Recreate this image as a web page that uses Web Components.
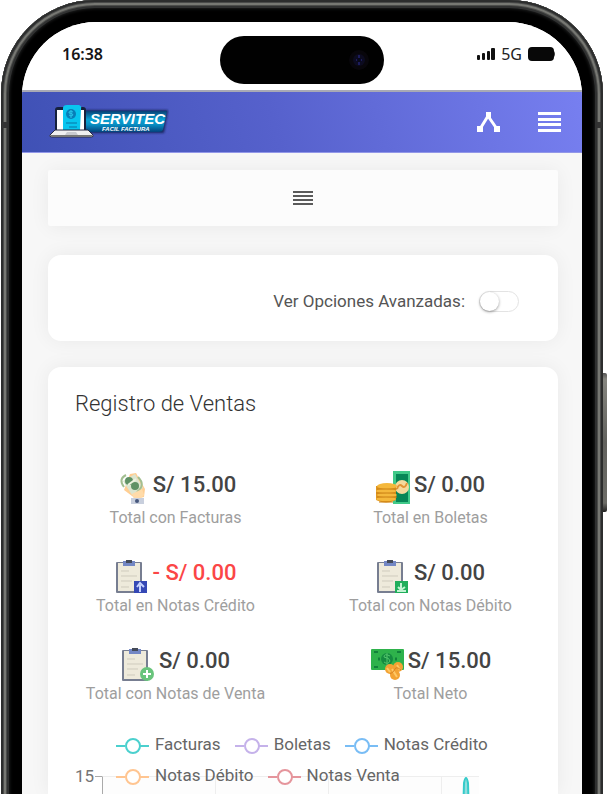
<!DOCTYPE html>
<html lang="es">
<head>
<meta charset="utf-8">
<meta name="viewport" content="width=device-width, initial-scale=1">
<title>Servitec - Registro de Ventas</title>
<style>
body{margin:0;background:#fff;color:#444;font-family:Roboto,"Liberation Sans",sans-serif}
</style>
</head>
<body>
<phone-frame>
  <status-bar></status-bar>
  <app-header></app-header>
  <app-content>
    <menu-strip></menu-strip>
    <ui-card><option-switch>Ver Opciones Avanzadas:</option-switch></ui-card>
    <ui-card grow>
      <sales-summary heading="Registro de Ventas">
        <sales-stat icon="hand" amount="S/ 15.00">Total con Facturas</sales-stat>
        <sales-stat icon="coins" amount="S/ 0.00">Total en Boletas</sales-stat>
        <sales-stat icon="note-up" amount="- S/ 0.00" negative>Total en Notas Crédito</sales-stat>
        <sales-stat icon="note-down" amount="S/ 0.00">Total con Notas Débito</sales-stat>
        <sales-stat icon="note-plus" amount="S/ 0.00">Total con Notas de Venta</sales-stat>
        <sales-stat icon="bill" amount="S/ 15.00">Total Neto</sales-stat>
      </sales-summary>
      <sales-chart>
        <legend-item style="--c:#4bd0ce">Facturas</legend-item>
        <legend-item style="--c:#c5b2ea">Boletas</legend-item>
        <legend-item style="--c:#79bdf5">Notas Crédito</legend-item>
        <legend-item style="--c:#ffc591">Notas Débito</legend-item>
        <legend-item style="--c:#e5959c">Notas Venta</legend-item>
      </sales-chart>
    </ui-card>
  </app-content>
</phone-frame>

<script>
const define = (name, html, setup) => {
  const t = document.createElement('template');
  t.innerHTML = html;
  customElements.define(name, class extends HTMLElement {
    constructor() {
      super();
      this.attachShadow({ mode: 'open' }).append(t.content.cloneNode(true));
    }
    connectedCallback() { if (setup) setup(this, this.shadowRoot); }
  });
};

define('phone-frame', `<style>
:host{display:block;height:100vh;overflow:hidden;position:relative}
.shell{box-sizing:border-box;height:calc(100% + 120px);margin:0 4px 0 1px;padding:22px 21px 0;border-radius:94px 94px 0 0;background:#000;
 box-shadow:inset 0 0 0 2px #2c2d2d,inset 0 0 0 3px #4a4b4a,inset 0 0 0 5px #777873,inset 0 0 0 6px #4c4d4b,inset 0 0 0 8px #303131,inset 0 0 3px 9px #1c1d1d}
.screen{height:calc(100% - 120px);display:flex;flex-direction:column;border-radius:74px 74px 0 0;overflow:hidden;background:#f7f7f7}
.band{position:absolute;width:5px;height:6px;top:122px;background:#333}
.band.l{left:2px}.band.r{right:5px}
.key{position:absolute;right:0;top:373px;width:4px;height:139px;border-radius:0 2px 2px 0;background:linear-gradient(#555,#85857f 6px,#62625e 50%,#6c6c67 130px,#222)}
</style><div class="shell"><div class="screen"><slot></slot></div></div><i class="band l"></i><i class="band r"></i><i class="key"></i>`);

define('status-bar', `<style>
:host{flex:none;display:grid;grid-template-columns:1fr auto 1fr;height:68px;background:#fff;color:#161616;align-items:start;
 font:600 16px/24px "Noto Sans","Open Sans",sans-serif}
time{padding:20px 0 0 40px}
.island{margin-top:14px;width:164px;height:48px;border-radius:24px;background:#010101;display:flex;align-items:center;justify-content:flex-end;box-sizing:border-box;padding-right:15px}
.sig{display:flex;justify-content:flex-end;align-items:center;gap:6px;padding:20px 26px 0 0;font-weight:400;color:#222}
svg{display:block}
</style><time>16:38</time>
<div class="island"><svg width="20" height="20"><circle cx="10" cy="10" r="10" fill="#08060b"/><circle cx="10" cy="10" r="6" fill="#0c0b20"/><path d="M10 5v3M7 10h6M10 12v3" stroke="#1c1c5c" stroke-width="2"/><circle cx="10" cy="10" r="2" fill="#080818"/></svg></div>
<div class="sig"><svg width="18" height="12" fill="#111"><rect y="7" width="3" height="5" rx="1"/><rect x="5" y="5" width="3" height="7" rx="1"/><rect x="10" y="3" width="3" height="9" rx="1"/><rect x="14" width="4" height="12" rx="1"/></svg><span>5G</span><svg width="28" height="14"><rect width="26" height="14" rx="4" fill="#080808"/><path d="M26 4q2 3 0 6z" fill="#333"/></svg></div>`);

define('app-header', `<style>
:host{flex:none;display:flex;align-items:center;height:63px;box-sizing:border-box;padding:0 21px 0 27px;border-top:2px solid #a8a9b5;border-bottom:1px solid #9297e8;
 background:linear-gradient(75deg,#3f51b5,#5661cc 45%,#777ff0)}
a{margin-right:auto}svg{display:block}
button{border:0;background:none;padding:0;margin:0;color:#fff}
.share{margin-right:38px}
text{font-family:"Liberation Sans",sans-serif;font-weight:bold;font-style:italic;fill:#fff}
</style>
<a href="#" aria-label="Servitec"><svg width="120" height="36" viewBox="0 0 120 36">
<defs><linearGradient id="g" x2="0" y2="1"><stop stop-color="#0a3f74"/><stop offset=".4" stop-color="#08a2d4"/><stop offset=".65" stop-color="#088ec2"/><stop offset="1" stop-color="#04427c"/></linearGradient><filter id="b" x="-10%" y="-30%" width="120%" height="160%"><feGaussianBlur stdDeviation="1"/></filter></defs>
<path d="M34 6H119L115 29H34z" fill="#17285e" filter="url(#b)"/>
<path d="M35 7H118L114 26Q113 28 110 28H35z" fill="url(#g)"/>
<path d="M42 15H112" stroke="#22c5ef" stroke-width="9" opacity=".7" filter="url(#b)"/>
<rect x="6" y="3" width="31" height="25" rx="3" fill="#16213d"/><rect x="8" y="6" width="27" height="21" fill="#fff"/>
<path d="M14 4q0-3 4-3h12q3 1 2 4l-1 21H14z" fill="#08c5ef"/><circle cx="22" cy="10" r="5" fill="#087eb8"/><path d="M24 8q-4-2-4 1 4 0 4 2-2 2-4 0M22 6v8" fill="none" stroke="#29c5e9"/><path d="M17 19h11M20 23h8" stroke="#089cca" stroke-width="2"/>
<path d="M6 26h33l5 5q1 2-2 2H3q-3 0-2-2z" fill="#efeff0" stroke="#282b43"/><path d="M2 32h41" stroke="#777" stroke-width="2"/><path d="M18 28h9l2 3H16z" fill="#c9cacf"/>
<text x="41" y="20" font-size="15">SERVITEC</text><text x="53" y="27" font-size="6">FACIL FACTURA</text></svg></a>
<button class="share" aria-label="Compartir"><svg width="23" height="20"><path d="M11 4L3 17M11 4L20 17" stroke="#fff" stroke-width="3" fill="none"/><path d="M9 0h5v6H9zM0 14h6v6H0zM17 14h6v6h-6z" fill="#fff"/></svg></button>
<button aria-label="Menú"><svg width="23" height="20" fill="#fff"><path d="M0 0h23v3H0zM0 6h23v3H0zM0 11h23v3H0zM0 17h23v3H0z"/></svg></button>`);

define('app-content', `<style>
:host{flex:1;min-height:0;display:flex;flex-direction:column;gap:26px;padding:17px 24px 0 26px;background:#f7f7f7}
</style><slot></slot>`);

define('menu-strip', `<style>
:host{flex:none;display:flex;justify-content:center;align-items:center;height:56px;margin-bottom:3px;background:#fcfcfc;border-radius:2px;box-shadow:0 1px 20px rgba(0,0,0,.06)}
button{border:0;background:none;padding:0}svg{display:block}
</style><button aria-label="Abrir menú"><svg width="20" height="14" fill="#5a5a5a"><path d="M0 0h20v2H0zM0 4h20v2H0zM0 8h20v2H0zM0 12h20v2H0z"/></svg></button>`);

define('ui-card', `<style>
:host{flex:none;display:block;background:#fff;border-radius:13px;box-shadow:0 0 20px rgba(0,0,0,.06)}
:host([grow]){flex:1;min-height:0;overflow:hidden;border-radius:13px 13px 0 0}
</style><slot></slot>`);

define('option-switch', `<style>
:host{display:flex;justify-content:flex-end;padding:34px 39px 28px 0}
label{display:flex;align-items:center;gap:14px;font-size:17px;line-height:24px;color:#555}
input{appearance:none;margin:0;box-sizing:border-box;width:40px;height:21px;border:1px solid #e3e3e3;border-radius:11px;background:#fff}
input::before{content:"";display:block;width:19px;height:19px;border-radius:50%;background:#fff;box-shadow:0 1px 3px rgba(0,0,0,.4)}
input:checked{background:#5661cc}input:checked::before{margin-left:auto}
</style><label><slot></slot><input type="checkbox" role="switch" aria-label="Ver Opciones Avanzadas"></label>`);

define('sales-summary', `<style>
:host{display:block;padding-top:20px}
h2{margin:0 27px 50px;font-size:22px;line-height:34px;font-weight:300;color:#333}
.grid{display:grid;grid-template-columns:1fr 1fr;row-gap:29px}
</style><h2></h2><div class="grid"><slot></slot></div>`, (el, r) => { r.querySelector('h2').textContent = el.getAttribute('heading'); });

const note = `<rect x="1" y="3" width="26" height="31" rx="1" fill="#777e91"/><rect x="3" y="4" width="22" height="28" fill="#eeeadb"/><path d="M8 2h12v5H8z" fill="#7387c4"/><path d="M11 1h6v3h-6z" fill="#444a58"/><path d="M6 12h8M6 17h16M6 22h11M6 28h8" stroke="#cfcbbd"/>`;
const icons = {
  hand: `<g transform="translate(5 1)"><path d="M10 2l6-1 9 16-1 8-8 2-12-9z" fill="#ffce93"/><path d="M3 9L15 2l8 14-11 7z" fill="#dce5cf"/><path d="M4 15q-6-8 2-12M18 5q8 8-1 15" fill="none" stroke="#a3bf91" stroke-width="2"/><circle cx="9" cy="9" r="4" fill="#5f9164"/><circle cx="15" cy="14" r="4" fill="#5f9164"/><path d="M8 13l8-6" stroke="#edf3df" stroke-width="2"/><path d="M12 22l10-5 2 6-4 4h-6z" fill="#ffdba9"/><path d="M11 26h13v6H11z" fill="#c8cfdd"/><circle cx="17" cy="29" r="2" fill="#46577d"/></g>`,
  coins: `<path d="M17 0h17v33H17z" fill="#40c989"/><path d="M20 3h12v28H20z" fill="#078657"/><circle cx="26" cy="16" r="7" fill="#f5d99d"/><path d="M21 18q2-6 5-3t5-3" stroke="#e39335" stroke-width="2" fill="none"/><path d="M0 15v14q10 5 20 0V15z" fill="#df951f"/><g fill="#f5b83c"><ellipse cx="11" cy="15" rx="10" ry="3"/><ellipse cx="10" cy="20" rx="10" ry="2"/><ellipse cx="11" cy="24" rx="10" ry="2"/><ellipse cx="10" cy="28" rx="10" ry="2"/></g><path d="M1 18h20M0 22h20M1 26h20M3 31h14" stroke="#ca8014"/>`,
  'note-up': note + `<path d="M19 22h13v12H19z" fill="#3548b5"/><path d="M25 33v-7M22 28l3-4 4 4" stroke="#c6d2ff" stroke-width="2" fill="none"/>`,
  'note-down': note + `<path d="M19 22h13v12H19z" fill="#20ae5b"/><path d="M25 24v6M22 28l3 3 4-3M21 32h9" stroke="#c3f3d3" stroke-width="2" fill="none"/>`,
  'note-plus': note + `<circle cx="26" cy="27" r="7" fill="#69c47c"/><path d="M26 23v8M22 27h8" stroke="#fff" stroke-width="2"/>`,
  bill: `<rect x="1" y="2" width="33" height="21" rx="1" fill="#2eb24b"/><path d="M4 5h4M27 5h4M4 20h4" stroke="#11823a" stroke-width="2"/><circle cx="17" cy="12" r="6" fill="#158b40"/><path d="M20 9q-6-3-6 1 6 1 6 4-2 4-6 1M17 6v12" stroke="#52c66b" fill="none"/><path d="M8 12h2M25 12h2" stroke="#11823a" stroke-width="3"/><g fill="#f3a333"><circle cx="28" cy="20" r="5"/><circle cx="20" cy="22" r="5"/><circle cx="25" cy="28" r="5"/></g><path d="M22 22l5 8M27 18l3 5M17 21l3 4" stroke="#ffc865" stroke-width="2"/><path d="M20 27q4-2 5-5t6 1" stroke="#d98221" fill="none"/>`
};
define('sales-stat', `<style>
:host{display:flex;flex-direction:column;align-items:center;color:#444}
:host([negative]) strong{color:#fb4646}
div{display:flex;align-items:flex-start;gap:4px;height:35px}
svg{display:block;width:34px;height:34px}
strong{font-size:22px;line-height:28px;font-weight:500}
small{font-size:16px;line-height:24px;color:#9e9e9e}
</style><div><svg viewBox="0 0 34 34" aria-hidden="true"></svg><strong></strong></div><small><slot></slot></small>`, (el, r) => {
  r.querySelector('svg').innerHTML = icons[el.getAttribute('icon')];
  r.querySelector('strong').textContent = el.getAttribute('amount');
});

define('legend-item', `<style>
:host{display:inline-flex;align-items:center;gap:6px;font-size:17px;line-height:31px;color:#666}
svg{display:block}
</style><svg width="33" height="18" fill="none" stroke="var(--c)" stroke-width="2"><path d="M0 10h9M24 10h9"/><circle cx="17" cy="10" r="7" fill="#fff"/></svg><slot></slot>`);

define('sales-chart', `<style>
:host{display:grid;padding-top:23px}
.legend,.area{grid-area:1/1}
.legend{display:flex;flex-wrap:wrap;column-gap:14px;align-content:start;padding:0 60px 0 68px;z-index:1}
.area{display:flex;padding:35px 79px 0 27px;font-size:17px;line-height:24px;color:#757575}
.tick{flex:none;width:7px;height:1px;margin:12px 0 0 1px;background:#aaa}
.plot{flex:1;height:220px;margin-top:12px;border-left:1px solid #aaa;border-top:1px solid #eee;background:repeating-linear-gradient(90deg,#fdfdfd 0 112px,#eee 112px 113px)}
svg{display:block;margin:0 7px 0 auto}
</style><div class="legend"><slot></slot></div>
<div class="area"><span>15</span><i class="tick"></i><div class="plot"><svg width="12" height="220"><path d="M-2 220L4 6Q6-4 8 6L14 220" fill="#91dedc" stroke="#35cbca" stroke-width="2"/></svg></div></div>`);
</script>
</body>
</html>
